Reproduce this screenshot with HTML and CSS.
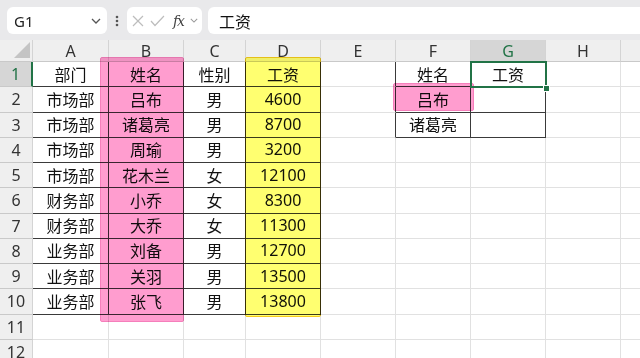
FILE: index.html
```html
<!DOCTYPE html>
<html lang="zh-CN">
  <head>
    <meta charset="UTF-8" />
    <meta name="viewport" content="width=device-width, initial-scale=1.0" />
    <title>工资查询</title>
    <link rel="stylesheet" href="styles.css">
  </head>
  <body>
    <div class="page">
      <div class="toolbar">
        <div class="name-box">
          <span>G1</span>
          <svg class="chev" width="10" height="6" viewBox="0 0 10 6"><polyline points="1,1 5,5 9,1" /></svg>
        </div>
        <div class="dots">
          <svg width="4" height="12" viewBox="0 0 4 12"><circle cx="2" cy="2" r="1.3" /><circle cx="2" cy="6" r="1.3" /><circle cx="2" cy="10" r="1.3" /></svg>
        </div>
        <div class="fx-box">
          <svg class="ico" width="12" height="12" viewBox="0 0 12 12"><line x1="1" y1="1" x2="11" y2="11" /><line x1="11" y1="1" x2="1" y2="11" /></svg>
          <svg class="ico" width="15" height="12" viewBox="0 0 15 12"><polyline points="1,6 5,10.5 14,1" /></svg>
          <span class="fx">fx</span>
          <svg class="chev small" width="8" height="5" viewBox="0 0 10 6"><polyline points="1,1 5,5 9,1" /></svg>
        </div>
        <div class="formula">工资</div>
      </div>

      <div class="sheet">
        <div class="hd corner"><div class="tri"></div></div>
        <div class="hd col">A</div>
        <div class="hd col">B</div>
        <div class="hd col">C</div>
        <div class="hd col">D</div>
        <div class="hd col">E</div>
        <div class="hd col">F</div>
        <div class="hd col sel">G</div>
        <div class="hd col">H</div>
        <div class="hd col"></div>

        <div class="hd row sel">1</div>
        <div class="c t">部门</div><div class="c t">姓名</div><div class="c t">性别</div><div class="c t">工资</div>
        <div class="c tr"></div><div class="c t">姓名</div><div class="c t">工资</div><div class="c"></div><div class="c"></div>

        <div class="hd row">2</div>
        <div class="c t">市场部</div><div class="c t">吕布</div><div class="c t">男</div><div class="c t">4600</div>
        <div class="c tr"></div><div class="c t">吕布</div><div class="c t"></div><div class="c"></div><div class="c"></div>

        <div class="hd row">3</div>
        <div class="c t">市场部</div><div class="c t">诸葛亮</div><div class="c t">男</div><div class="c t">8700</div>
        <div class="c tr"></div><div class="c t">诸葛亮</div><div class="c t"></div><div class="c"></div><div class="c"></div>

        <div class="hd row">4</div>
        <div class="c t">市场部</div><div class="c t">周瑜</div><div class="c t">男</div><div class="c t">3200</div>
        <div class="c"></div><div class="c"></div><div class="c"></div><div class="c"></div><div class="c"></div>

        <div class="hd row">5</div>
        <div class="c t">市场部</div><div class="c t">花木兰</div><div class="c t">女</div><div class="c t">12100</div>
        <div class="c"></div><div class="c"></div><div class="c"></div><div class="c"></div><div class="c"></div>

        <div class="hd row">6</div>
        <div class="c t">财务部</div><div class="c t">小乔</div><div class="c t">女</div><div class="c t">8300</div>
        <div class="c"></div><div class="c"></div><div class="c"></div><div class="c"></div><div class="c"></div>

        <div class="hd row">7</div>
        <div class="c t">财务部</div><div class="c t">大乔</div><div class="c t">女</div><div class="c t">11300</div>
        <div class="c"></div><div class="c"></div><div class="c"></div><div class="c"></div><div class="c"></div>

        <div class="hd row">8</div>
        <div class="c t">业务部</div><div class="c t">刘备</div><div class="c t">男</div><div class="c t">12700</div>
        <div class="c"></div><div class="c"></div><div class="c"></div><div class="c"></div><div class="c"></div>

        <div class="hd row">9</div>
        <div class="c t">业务部</div><div class="c t">关羽</div><div class="c t">男</div><div class="c t">13500</div>
        <div class="c"></div><div class="c"></div><div class="c"></div><div class="c"></div><div class="c"></div>

        <div class="hd row">10</div>
        <div class="c t">业务部</div><div class="c t">张飞</div><div class="c t">男</div><div class="c t">13800</div>
        <div class="c"></div><div class="c"></div><div class="c"></div><div class="c"></div><div class="c"></div>

        <div class="hd row">11</div>
        <div class="c"></div><div class="c"></div><div class="c"></div><div class="c"></div>
        <div class="c"></div><div class="c"></div><div class="c"></div><div class="c"></div><div class="c"></div>

        <div class="hd row">12</div>
        <div class="c"></div><div class="c"></div><div class="c"></div><div class="c"></div>
        <div class="c"></div><div class="c"></div><div class="c"></div><div class="c"></div><div class="c"></div>
      </div>

      <!-- highlighter marks and selection lie over the grid -->
      <div class="mark pink col-b"></div>
      <div class="mark yellow col-d"></div>
      <div class="mark pink cell-f2"></div>
      <div class="selection"></div>
      <div class="handle"></div>
    </div>
  </body>
</html>
```

FILE: styles.css
```css
body {
  margin: 0;
  background: #fff;
  overflow: hidden;
}
.page {
  position: relative;
  width: 640px;
  height: 358px;
  overflow: hidden;
  font-family: "Noto Sans", "Noto Sans CJK SC", sans-serif;
  color: #111;
}
/* Toolbar */
.toolbar {
  display: flex;
  align-items: center;
  height: 40px;
  box-sizing: border-box;
  padding: 7px 0 6px 7px;
  background: #e9e9eb;
}
.name-box,
.fx-box,
.formula {
  height: 27px;
  box-sizing: border-box;
  background: #fff;
  border-radius: 6px;
  display: flex;
  align-items: center;
}
.name-box {
  width: 100px;
  padding: 0 6px 0 7px;
  justify-content: space-between;
  font-size: 15px;
  color: #222;
}
.chev {
  fill: none;
  stroke: #555;
  stroke-width: 1.3;
}
.chev.small {
  stroke: #999;
}
.dots {
  width: 20px;
  display: flex;
  justify-content: center;
}
.dots svg {
  fill: #555;
}
.fx-box {
  width: 75px;
  padding: 0 4px 0 5px;
  gap: 6px;
}
.ico {
  fill: none;
  stroke: #bdbdbd;
  stroke-width: 1.2;
}
.fx {
  font-family: "DejaVu Serif", "Liberation Serif", serif;
  font-style: italic;
  font-size: 14px;
  color: #444;
  margin-left: 2px;
  letter-spacing: -1px;
}
.formula {
  flex: 1;
  margin-left: 6px;
  margin-right: -10px;
  padding-left: 11px;
  font-size: 16px;
  color: #111;
}
/* Sheet grid */
.sheet {
  display: grid;
  grid-template-columns: 33px 76px 75px 62px 75px 75px 75px 75px 75px 75px;
  grid-template-rows: 22px repeat(12, 25.25px);
}
.hd {
  box-sizing: border-box;
  background: #efefef;
  border-right: 1px solid #d4d4d4;
  border-bottom: 1px solid #c9c9c9;
  display: flex;
  align-items: center;
  justify-content: center;
  font-size: 16px;
  color: #333;
}
.hd.sel {
  background: #d6d6d6;
  color: #217346;
}
.hd.row {
  font-size: 16px;
}
.hd.row.sel {
  border-right: 2px solid #217346;
}
.corner {
  align-items: flex-end;
  justify-content: flex-end;
  padding: 0 2px 3px 0;
}
.tri {
  width: 16px;
  height: 16px;
  background: #c4c4c4;
  clip-path: polygon(100% 0, 100% 100%, 0 100%);
}
.c {
  box-sizing: border-box;
  border-right: 1px solid #e1e1e1;
  border-bottom: 1px solid #e1e1e1;
  display: flex;
  align-items: center;
  justify-content: center;
  font-size: 16px;
  padding-bottom: 1px;
}
.c.t {
  border-right-color: #3a3a3a;
  border-bottom-color: #3a3a3a;
}
.c.tr {
  border-right-color: #3a3a3a;
}
/* Overlays */
.mark {
  position: absolute;
  box-sizing: border-box;
  mix-blend-mode: multiply;
  border-radius: 2px;
}
.pink {
  background: #ff9dcf;
  border: 1px solid #f57fbb;
}
.yellow {
  background: #ffff70;
  border: 1px solid #f5cc1a;
}
.col-b {
  left: 100px;
  top: 57px;
  width: 84px;
  height: 265px;
}
.col-d {
  left: 245px;
  top: 57px;
  width: 76px;
  height: 260px;
}
.cell-f2 {
  left: 393px;
  top: 83px;
  width: 81px;
  height: 28px;
}
.selection {
  position: absolute;
  left: 470px;
  top: 61px;
  width: 77px;
  height: 27px;
  box-sizing: border-box;
  border: 2px solid #217346;
}
.handle {
  position: absolute;
  left: 543px;
  top: 85px;
  width: 5px;
  height: 5px;
  background: #217346;
  border: 1px solid #fff;
}
```
